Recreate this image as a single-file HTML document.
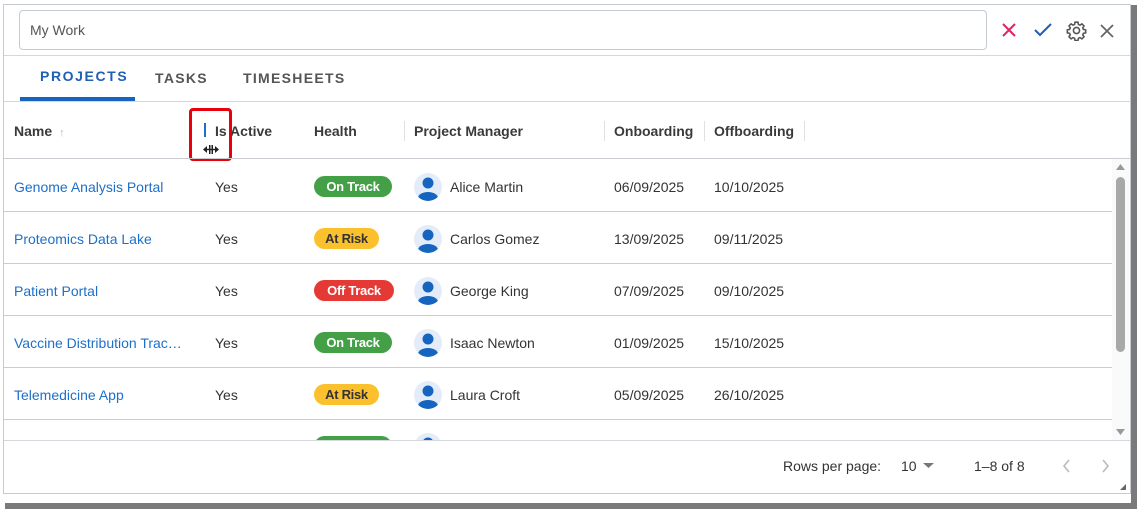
<!DOCTYPE html>
<html><head><style>
*{box-sizing:border-box;margin:0;padding:0}
body{width:1137px;height:509px;background:#fff;position:relative;overflow:hidden;font-family:"Liberation Sans",sans-serif;font-size:14px;color:#333}
.abs{position:absolute}
.panel{left:3px;top:4px;width:1128px;height:490px;border:1px solid #c5cad3;background:#fff}
.shR{left:1131px;top:5px;width:6px;height:504px;background:#7a7a7a}
.shB{left:5px;top:503px;width:1132px;height:6px;background:#7a7a7a}
.line{height:1px;background:#d4d7dc}
.cell{position:absolute;white-space:nowrap}
.link{color:#1e6fc9}
.badge{position:absolute;height:21px;border-radius:11px;font-weight:bold;font-size:13px;line-height:21px;text-align:center;letter-spacing:-0.3px}
.g{background:#43a047;color:#fff;width:78px}
.y{background:#fbc02d;color:#333;width:65px}
.r{background:#e53935;color:#fff;width:80px}
.av{position:absolute;width:28px;height:28px;border-radius:50%;background:#e3ecf8;overflow:hidden}
.hd{position:absolute;top:123px;font-weight:bold;color:#3a3a3a;font-size:14px}
.sep{position:absolute;top:121px;width:1px;height:20px;background:#e0e0e0}
.row .cell{top:20px}
</style></head><body>
<div class="abs shR"></div><div class="abs shB"></div>
<div class="abs panel"></div>
<div class="abs" style="left:19px;top:10px;width:968px;height:40px;border:1px solid #c5cad3;border-radius:4px"></div>
<div class="cell" style="left:30px;top:22px;color:#555">My Work</div>
<svg class="abs" style="left:1000px;top:21px" width="18" height="18" viewBox="0 0 18 18"><path d="M3 3L15 15M15 3L3 15" stroke="#e0245e" stroke-width="2"/></svg>
<svg class="abs" style="left:1033px;top:21px" width="20" height="18" viewBox="0 0 20 18"><path d="M2 9L7 14L18 3" stroke="#1f5fb5" stroke-width="2" fill="none"/></svg>
<svg class="abs" style="left:1066px;top:20px" width="21" height="21" viewBox="0 0 24 24"><path fill="none" stroke="#555" stroke-width="1.8" d="M10.3 2.5h3.4l.5 2.6 1.8.8 2.2-1.5 2.4 2.4-1.5 2.2.8 1.8 2.6.5v3.4l-2.6.5-.8 1.8 1.5 2.2-2.4 2.4-2.2-1.5-1.8.8-.5 2.6h-3.4l-.5-2.6-1.8-.8-2.2 1.5-2.4-2.4 1.5-2.2-.8-1.8-2.6-.5v-3.4l2.6-.5.8-1.8-1.5-2.2 2.4-2.4 2.2 1.5 1.8-.8z"/><circle cx="12" cy="12" r="3.5" fill="none" stroke="#555" stroke-width="1.8"/></svg>
<svg class="abs" style="left:1099px;top:23px" width="16" height="16" viewBox="0 0 16 16"><path d="M2 2L14 14M14 2L2 14" stroke="#666" stroke-width="1.8"/></svg>
<div class="abs line" style="left:4px;top:55px;width:1126px"></div>
<div class="cell" style="left:40px;top:68px;color:#1f5fb5;font-weight:bold;letter-spacing:1.6px">PROJECTS</div>
<div class="cell" style="left:155px;top:70px;color:#555;font-weight:bold;letter-spacing:1.3px">TASKS</div>
<div class="cell" style="left:243px;top:70px;color:#555;font-weight:bold;letter-spacing:1.3px">TIMESHEETS</div>
<div class="abs" style="left:20px;top:97px;width:115px;height:4px;background:#1565c0"></div>
<div class="abs line" style="left:4px;top:101px;width:1126px"></div>
<div class="hd" style="left:14px">Name <span style="color:#bbb;font-weight:normal;font-size:11px">&nbsp;↑</span></div>
<div class="abs" style="left:204px;top:123px;width:2px;height:14px;background:#1e6fc9"></div>
<div class="hd" style="left:215px">Is Active</div>
<div class="hd" style="left:314px">Health</div>
<div class="sep" style="left:404px"></div><div class="hd" style="left:414px">Project Manager</div>
<div class="sep" style="left:604px"></div><div class="hd" style="left:614px">Onboarding</div>
<div class="sep" style="left:704px"></div><div class="hd" style="left:714px">Offboarding</div>
<div class="sep" style="left:804px"></div>
<div class="abs" style="left:189px;top:108px;width:43px;height:53px;border:3px solid #e8000b;border-radius:4px"></div>
<svg class="abs" style="left:203px;top:145px" width="16" height="9" viewBox="0 0 16 9"><path d="M0 4.5L4 1V8z M16 4.5L12 1V8z" fill="#222"/><rect x="6" y="0" width="1.5" height="9" fill="#222"/><rect x="8.5" y="0" width="1.5" height="9" fill="#222"/><rect x="3" y="3.8" width="10" height="1.4" fill="#222"/></svg>
<div class="abs line" style="left:4px;top:158px;width:1126px;background:#c9ccd1"></div>

<div class="row" style="position:absolute;left:0;top:159px">
<div class="cell link" style="left:14px">Genome Analysis Portal</div><div class="cell" style="left:215px">Yes</div>
<div class="badge g" style="left:314px;top:17px">On Track</div>
<div class="av" style="left:414px;top:14px"><svg width="28" height="28"><circle cx="14" cy="10" r="5.5" fill="#1565c0"/><ellipse cx="14" cy="25" rx="10" ry="6" fill="#1565c0"/></svg></div>
<div class="cell" style="left:450px">Alice Martin</div><div class="cell" style="left:614px">06/09/2025</div><div class="cell" style="left:714px">10/10/2025</div>
<div class="abs line" style="left:4px;top:52px;width:1108px;background:#c9ccd1"></div>
</div>
<div class="row" style="position:absolute;left:0;top:211px">
<div class="cell link" style="left:14px">Proteomics Data Lake</div><div class="cell" style="left:215px">Yes</div>
<div class="badge y" style="left:314px;top:17px">At Risk</div>
<div class="av" style="left:414px;top:14px"><svg width="28" height="28"><circle cx="14" cy="10" r="5.5" fill="#1565c0"/><ellipse cx="14" cy="25" rx="10" ry="6" fill="#1565c0"/></svg></div>
<div class="cell" style="left:450px">Carlos Gomez</div><div class="cell" style="left:614px">13/09/2025</div><div class="cell" style="left:714px">09/11/2025</div>
<div class="abs line" style="left:4px;top:52px;width:1108px;background:#c9ccd1"></div>
</div>
<div class="row" style="position:absolute;left:0;top:263px">
<div class="cell link" style="left:14px">Patient Portal</div><div class="cell" style="left:215px">Yes</div>
<div class="badge r" style="left:314px;top:17px">Off Track</div>
<div class="av" style="left:414px;top:14px"><svg width="28" height="28"><circle cx="14" cy="10" r="5.5" fill="#1565c0"/><ellipse cx="14" cy="25" rx="10" ry="6" fill="#1565c0"/></svg></div>
<div class="cell" style="left:450px">George King</div><div class="cell" style="left:614px">07/09/2025</div><div class="cell" style="left:714px">09/10/2025</div>
<div class="abs line" style="left:4px;top:52px;width:1108px;background:#c9ccd1"></div>
</div>
<div class="row" style="position:absolute;left:0;top:315px">
<div class="cell link" style="left:14px">Vaccine Distribution Trac…</div><div class="cell" style="left:215px">Yes</div>
<div class="badge g" style="left:314px;top:17px">On Track</div>
<div class="av" style="left:414px;top:14px"><svg width="28" height="28"><circle cx="14" cy="10" r="5.5" fill="#1565c0"/><ellipse cx="14" cy="25" rx="10" ry="6" fill="#1565c0"/></svg></div>
<div class="cell" style="left:450px">Isaac Newton</div><div class="cell" style="left:614px">01/09/2025</div><div class="cell" style="left:714px">15/10/2025</div>
<div class="abs line" style="left:4px;top:52px;width:1108px;background:#c9ccd1"></div>
</div>
<div class="row" style="position:absolute;left:0;top:367px">
<div class="cell link" style="left:14px">Telemedicine App</div><div class="cell" style="left:215px">Yes</div>
<div class="badge y" style="left:314px;top:17px">At Risk</div>
<div class="av" style="left:414px;top:14px"><svg width="28" height="28"><circle cx="14" cy="10" r="5.5" fill="#1565c0"/><ellipse cx="14" cy="25" rx="10" ry="6" fill="#1565c0"/></svg></div>
<div class="cell" style="left:450px">Laura Croft</div><div class="cell" style="left:614px">05/09/2025</div><div class="cell" style="left:714px">26/10/2025</div>
<div class="abs line" style="left:4px;top:52px;width:1108px;background:#c9ccd1"></div>
</div>
<div class="abs" style="left:0;top:420px;width:1112px;height:20px;overflow:hidden">
<div class="badge g" style="left:314px;top:16px"></div>
<div class="av" style="left:414px;top:13px"><svg width="28" height="28"><circle cx="14" cy="10" r="5.5" fill="#1565c0"/></svg></div>
</div>
<div class="abs line" style="left:4px;top:440px;width:1126px"></div>
<div class="abs" style="left:1112px;top:159px;width:18px;height:281px;background:#fafafa"></div>
<div class="abs" style="left:1116px;top:177px;width:9px;height:175px;border-radius:5px;background:#a8a8a8"></div>
<svg class="abs" style="left:1115px;top:163px" width="11" height="8"><path d="M1 7L5.5 1L10 7z" fill="#999"/></svg>
<svg class="abs" style="left:1115px;top:428px" width="11" height="8"><path d="M1 1L5.5 7L10 1z" fill="#999"/></svg>
<div class="cell" style="left:783px;top:458px">Rows per page:</div>
<div class="cell" style="left:901px;top:458px">10</div>
<svg class="abs" style="left:923px;top:463px" width="11" height="6"><path d="M0 0L5.5 5L11 0z" fill="#777"/></svg>
<div class="cell" style="left:974px;top:458px">1–8 of 8</div>
<svg class="abs" style="left:1061px;top:458px" width="10" height="16"><path d="M8 2L3 8L8 14" stroke="#bbb" stroke-width="1.6" fill="none"/></svg>
<svg class="abs" style="left:1101px;top:458px" width="10" height="16"><path d="M2 2L7 8L2 14" stroke="#bbb" stroke-width="1.6" fill="none"/></svg>
<svg class="abs" style="left:1120px;top:484px" width="6" height="6"><path d="M6 0V6H0z" fill="#666"/></svg>
</body></html>
